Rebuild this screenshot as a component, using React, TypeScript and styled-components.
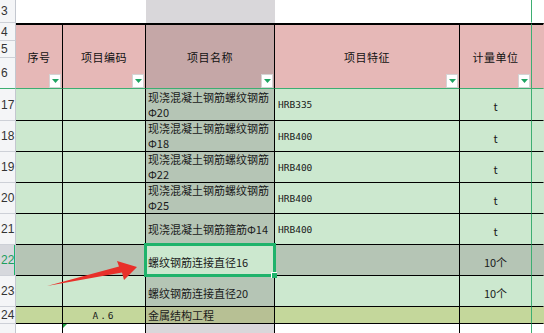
import styled, { createGlobalStyle } from "styled-components";

const GlobalStyle = createGlobalStyle`
  html, body {
    margin: 0;
    padding: 0;
    background: #fff;
    overflow: hidden;
  }
  body {
    font-family: "Noto Sans CJK SC", "Liberation Sans", sans-serif;
  }
`;

const colors = {
  pink: "#E6B8B7",
  pinkSel: "#C5A7A7",
  green: "#CCE8CF",
  greenSel: "#B5C5B5",
  olive: "#C4D79B",
  oliveSel: "#B7C094",
  graySel: "#D9D7DA",
  freeze: "#3DAE72",
  accent: "#1FB36B",
};

type Row = {
  n: number;
  name: string;
  spec: string;
  unit: string;
  selected?: boolean;
};

const rows: Row[] = [
  { n: 17, name: "现浇混凝土钢筋螺纹钢筋\nΦ20", spec: "HRB335", unit: "t" },
  { n: 18, name: "现浇混凝土钢筋螺纹钢筋\nΦ18", spec: "HRB400", unit: "t" },
  { n: 19, name: "现浇混凝土钢筋螺纹钢筋\nΦ22", spec: "HRB400", unit: "t" },
  { n: 20, name: "现浇混凝土钢筋螺纹钢筋\nΦ25", spec: "HRB400", unit: "t" },
  { n: 21, name: "现浇混凝土钢筋箍筋Φ14", spec: "HRB400", unit: "t" },
  { n: 22, name: "螺纹钢筋连接直径16", spec: "", unit: "10个", selected: true },
  { n: 23, name: "螺纹钢筋连接直径20", spec: "", unit: "10个" },
];

const headers = ["序号", "项目编码", "项目名称", "项目特征", "计量单位"];

export default function App() {
  return (
    <>
      <GlobalStyle />
      <Sheet>
        {/* row 3 */}
        <RowHead>3</RowHead>
        <Cell $bg="#fff" $right="transparent" $bottom="transparent" />
        <Cell $bg="#fff" $right="transparent" $bottom="transparent" />
        <Cell $bg={colors.graySel} $right="transparent" $bottom="transparent" />
        <Cell $bg="#fff" $right="transparent" $bottom="transparent" />
        <Cell $bg="#fff" $right={colors.freeze} $bottom="transparent" />
        <Cell $bg="#fff" $right="transparent" $bottom="transparent" />

        {/* header rows 4-6 */}
        <HeadRowNums>
          <RowHead $h={18}>4</RowHead>
          <RowHead $h={17}>5</RowHead>
          <RowHead $h={31} $last>
            6
          </RowHead>
        </HeadRowNums>
        {headers.map((h, i) => (
          <HeadCell
            key={h}
            $bg={i === 2 ? colors.pinkSel : colors.pink}
            $right={i === 4 ? colors.freeze : "#000"}
          >
            {h}
            <FilterBtn>
              <svg width="7" height="4" viewBox="0 0 7 4">
                <path d="M0 0H7L3.5 4Z" fill="#1FA463" />
              </svg>
            </FilterBtn>
          </HeadCell>
        ))}
        <HeadCell $bg={colors.pink} $right="transparent" />

        {/* body */}
        {rows.map((r) => {
          const rowBg = r.selected ? colors.greenSel : colors.green;
          return (
            <Line key={r.n}>
              <RowHead $active={r.selected}>{r.n}</RowHead>
              <Cell $bg={rowBg} />
              <Cell $bg={rowBg} />
              <Cell
                $bg={r.selected ? colors.green : colors.greenSel}
                $selected={r.selected}
                $pad="0 0 0 2px"
                $drop={r.selected || r.n === 23}
              >
                {r.name}
              </Cell>
              <Cell $bg={rowBg} $mono $pad="0 0 0 3px">
                {r.spec}
              </Cell>
              <Cell $bg={rowBg} $right={colors.freeze} $center $drop>
                {r.unit}
              </Cell>
              <Cell $bg={rowBg} $right="transparent" />
            </Line>
          );
        })}

        {/* row 24 */}
        <RowHead>24</RowHead>
        <Cell $bg={colors.olive} />
        <Cell $bg={colors.olive} $mono $center $spread>
          A.6
        </Cell>
        <Cell $bg={colors.oliveSel} $pad="0 0 0 2px">
          金属结构工程
        </Cell>
        <Cell $bg={colors.olive} />
        <Cell $bg={colors.olive} $right={colors.freeze} />
        <Cell $bg={colors.olive} $right="transparent" />

        {/* row 25, only its top edge is in view */}
        <RowHead />
        <Cell $bg="#fff" $bottom="transparent" />
        <Cell $bg="#fff" $bottom="transparent" $flag />
        <Cell $bg={colors.graySel} $bottom="transparent" />
        <Cell $bg="#fff" $bottom="transparent" />
        <Cell $bg="#fff" $right={colors.freeze} $bottom="transparent" />
        <Cell $bg="#fff" $right="transparent" $bottom="transparent" />

        <Arrow width="544" height="333" viewBox="0 0 544 333">
          <path
            d="M47 286L119 266.5L117 261L137 267L124 280L122 272.5Z"
            fill="#E8302A"
          />
        </Arrow>
      </Sheet>
    </>
  );
}

const Sheet = styled.div`
  position: relative;
  display: grid;
  grid-template-columns: 16px 47px 83px 129px 185px 72px 12px;
  grid-template-rows: 23px 66px 32px repeat(6, 31px) 17px 10px;
  width: 544px;
  height: 333px;
  overflow: hidden;
  font-size: 11px;
  color: #1a1a1a;
`;

const Line = styled.div`
  display: contents;
`;

const RowHead = styled.div<{ $h?: number; $active?: boolean; $last?: boolean }>`
  box-sizing: border-box;
  position: relative;
  height: ${(p) => (p.$h ? `${p.$h}px` : "auto")};
  padding-left: 1px;
  display: flex;
  align-items: center;
  overflow: hidden;
  white-space: nowrap;
  font-family: "Liberation Sans", Arial, sans-serif;
  font-size: 12px;
  color: ${(p) => (p.$active ? "#1E9E5E" : "#333")};
  background: ${(p) => (p.$active ? "#D6D8DD" : "#F4F5F7")};
  border-right: 1px solid #C3C7CF;
  border-bottom: 1px solid ${(p) => (p.$last ? colors.freeze : "#CDD0D7")};
  ${(p) =>
    p.$active &&
    `
    &::after {
      content: "";
      position: absolute;
      top: 0;
      right: -1px;
      width: 2px;
      height: 100%;
      background: ${colors.accent};
    }
  `}
`;

const HeadRowNums = styled.div`
  display: flex;
  flex-direction: column;
`;

const HeadCell = styled.div<{ $bg: string; $right: string }>`
  box-sizing: border-box;
  position: relative;
  display: flex;
  align-items: center;
  justify-content: center;
  background: ${(p) => p.$bg};
  border-top: 2px solid #000;
  border-right: 1px solid ${(p) => p.$right};
  border-bottom: 1px solid ${colors.freeze};
  font-size: 11px;
  color: #111;
  letter-spacing: 0.5px;
`;

const FilterBtn = styled.div`
  position: absolute;
  right: 1px;
  bottom: 0;
  box-sizing: border-box;
  width: 12px;
  height: 14px;
  background: #fff;
  border: 1px solid #D4D4D4;
  display: flex;
  align-items: center;
  justify-content: center;
`;

const Cell = styled.div<{
  $bg: string;
  $right?: string;
  $bottom?: string;
  $center?: boolean;
  $mono?: boolean;
  $spread?: boolean;
  $pad?: string;
  $drop?: boolean;
  $selected?: boolean;
  $flag?: boolean;
}>`
  box-sizing: border-box;
  position: relative;
  display: flex;
  align-items: center;
  justify-content: ${(p) => (p.$center ? "center" : "flex-start")};
  padding: ${(p) => p.$pad ?? "0"};
  padding-top: ${(p) => (p.$drop ? "4px" : "0")};
  background: ${(p) => p.$bg};
  border-right: 1px solid ${(p) => p.$right ?? "#000"};
  border-bottom: 1px solid ${(p) => p.$bottom ?? "#000"};
  white-space: pre-line;
  line-height: 15px;
  overflow: visible;
  font-family: ${(p) =>
    p.$mono
      ? `"DejaVu Sans Mono", "Liberation Mono", monospace`
      : `"Noto Sans CJK SC", "Liberation Sans", sans-serif`};
  font-size: ${(p) => (p.$mono ? "9.5px" : "11px")};
  letter-spacing: ${(p) => (p.$spread ? "2px" : "0")};
  ${(p) =>
    p.$selected &&
    `
    z-index: 2;
    &::before {
      content: "";
      position: absolute;
      left: -2px;
      top: -2px;
      right: -2px;
      bottom: -2px;
      border: 3px solid ${colors.accent};
    }
    &::after {
      content: "";
      position: absolute;
      right: -3px;
      bottom: -3px;
      width: 5px;
      height: 5px;
      background: ${colors.accent};
      border-left: 1px solid #fff;
      border-top: 1px solid #fff;
    }
  `}
  ${(p) =>
    p.$flag &&
    `
    &::after {
      content: "";
      position: absolute;
      left: 0;
      top: 0;
      border-top: 4px solid #1E9E3E;
      border-right: 4px solid transparent;
    }
  `}
`;

const Arrow = styled.svg`
  position: absolute;
  left: 0;
  top: 0;
  pointer-events: none;
  z-index: 3;
`;
